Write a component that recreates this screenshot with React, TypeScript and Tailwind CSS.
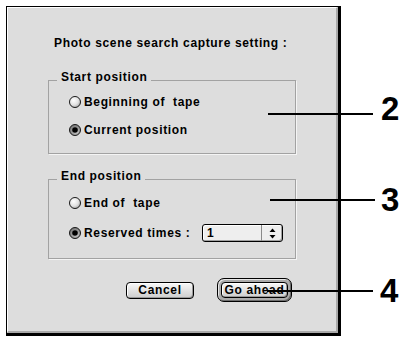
import type { ReactNode } from 'react';

const font = { fontFamily: '"Liberation Sans", Arial, sans-serif' };

function Radio({ checked }: { checked?: boolean }) {
  return (
    <svg width="12" height="12" viewBox="0 0 12 12" className="shrink-0">
      <defs>
        <radialGradient id="radioOff" cx="38%" cy="35%" r="70%">
          <stop offset="0%" stopColor="#ffffff" />
          <stop offset="60%" stopColor="#e2e2e2" />
          <stop offset="100%" stopColor="#a8a8a8" />
        </radialGradient>
        <radialGradient id="radioOn" cx="60%" cy="65%" r="70%">
          <stop offset="0%" stopColor="#cfcfcf" />
          <stop offset="100%" stopColor="#6a6a6a" />
        </radialGradient>
      </defs>
      <circle cx="6" cy="6" r="5.5" fill={checked ? 'url(#radioOn)' : 'url(#radioOff)'} stroke="#1a1a1a" strokeWidth="1" />
      {checked && <circle cx="6" cy="6" r="2.8" fill="#000" />}
    </svg>
  );
}

function Option({ checked, children }: { checked?: boolean; children: ReactNode }) {
  return (
    <div className="flex items-center gap-[3px] ml-[20px] h-[16px]">
      <Radio checked={checked} />
      <span className="leading-[16px]">{children}</span>
    </div>
  );
}

function GroupBox({ title, className, children }: { title: string; className: string; children: ReactNode }) {
  return (
    <div className={`w-[248px] border border-[#a2a2a2] shadow-[1px_1px_0_#f4f4f4] flex flex-col ${className}`}>
      <span className="-mt-[11px] ml-[8px] self-start px-[4px] bg-[#dddddd] leading-[14px]">{title}</span>
      {children}
    </div>
  );
}

function MacButton({ label, className = '' }: { label: string; className?: string }) {
  return (
    <div
      className={`h-[17px] rounded-[4px] border border-black bg-gradient-to-b from-[#f8f8f8] to-[#cdcdcd] shadow-[inset_-1px_-1px_0_#9a9a9a,inset_1px_1px_0_#ffffff] flex items-center justify-center leading-none ${className}`}
    >
      {label}
    </div>
  );
}

export default function App() {
  return (
    <div className="relative w-[406px] h-[337px] bg-white overflow-hidden text-black" style={font}>
      <div className="ml-[6px] mt-[6px] w-[335px] h-[330px] border-l border-t border-r-[3px] border-b-[3px] border-black bg-[#dddddd]">
        <div className="h-full border-l border-t border-r-2 border-b-2 border-l-white border-t-white border-r-[#a9a9a9] border-b-[#a9a9a9] flex flex-col pl-[40px] pt-[27px] text-[12px] font-bold tracking-[0.65px]">
          <div className="ml-[6px] leading-[16px]">Photo scene search capture setting :</div>

          <GroupBox title="Start position" className="mt-[29px] h-[74px]">
            <div className="mt-[10px]">
              <Option>Beginning of&nbsp; tape</Option>
            </div>
            <div className="mt-[12px]">
              <Option checked>Current position</Option>
            </div>
          </GroupBox>

          <GroupBox title="End position" className="mt-[25px] h-[80px]">
            <div className="mt-[12px]">
              <Option>End of&nbsp; tape</Option>
            </div>
            <div className="mt-[13px] flex items-center ml-[20px] h-[18px]">
              <Radio checked />
              <span className="ml-[3px] w-[118px] leading-[16px]">Reserved times :</span>
              <div className="w-[81px] h-[18px] flex border border-black rounded-[3px] bg-[#eeeeee] shadow-[inset_1px_1px_0_#ffffff,inset_-1px_-1px_0_#a0a0a0]">
                <span className="flex-1 pl-[4px] leading-[16px]">1</span>
                <span className="w-[21px] border-l border-[#8a8a8a] flex items-center justify-center">
                  <svg width="7" height="11" viewBox="0 0 7 11">
                    <path d="M3.5 0.5 L6.5 4 H0.5Z" fill="#000" />
                    <path d="M0.5 7 H6.5 L3.5 10.5Z" fill="#000" />
                  </svg>
                </span>
              </div>
            </div>
          </GroupBox>

          <div className="mt-[19px] w-[248px] h-[24px] flex items-center justify-end pr-[4px] gap-[23px]">
            <MacButton label="Cancel" className="w-[68px]" />
            <div className="w-[75px] h-[24px] p-[3px] rounded-[7px] border border-black bg-[#ababab] shadow-[inset_1px_1px_0_#e6e6e6,inset_-1px_-1px_0_#6e6e6e]">
              <MacButton label="Go ahead" className="w-full h-full" />
            </div>
          </div>
        </div>
      </div>

      <div className="absolute left-[268px] top-[113px] w-[105px] h-[2px] bg-black" />
      <div className="absolute left-[381px] top-[93px] text-[33px] font-bold leading-[32px]">2</div>

      <div className="absolute left-[270px] top-[199px] w-[105px] h-[2px] bg-black" />
      <div className="absolute left-[381px] top-[184px] text-[33px] font-bold leading-[32px]">3</div>

      <div className="absolute left-[267px] top-[290px] w-[106px] h-[2px] bg-black" />
      <div className="absolute left-[380px] top-[275px] text-[33px] font-bold leading-[32px]">4</div>
    </div>
  );
}
